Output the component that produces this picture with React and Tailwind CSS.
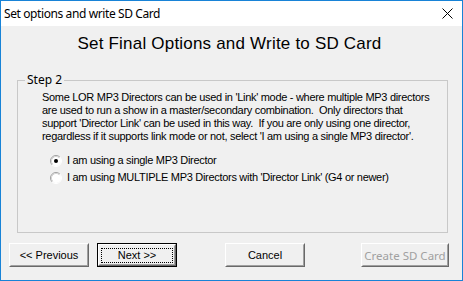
function Radio({ checked }) {
  return (
    <svg width="12" height="12" viewBox="0 0 12 12" className="shrink-0">
      <circle cx="6" cy="6" r="5" fill="#ffffff" />
      <path d="M2.11 9.89 A5.5 5.5 0 0 1 9.89 2.11" fill="none" stroke="#a0a0a0" strokeWidth="1" />
      <path d="M9.89 2.11 A5.5 5.5 0 0 1 2.11 9.89" fill="none" stroke="#ffffff" strokeWidth="1" />
      <path d="M2.82 9.18 A4.5 4.5 0 0 1 9.18 2.82" fill="none" stroke="#d4d4d4" strokeWidth="1" />
      {checked && <circle cx="6" cy="6" r="2" fill="#000000" />}
    </svg>
  )
}

function Button({ children, width, isDefault, disabled }) {
  const face = (
    <div className="flex h-full w-full border border-t-white border-l-white border-r-[#696969] border-b-[#696969]">
      <div className="flex h-full w-full items-center justify-center border border-t-[#f0f0f0] border-l-[#f0f0f0] border-r-[#a0a0a0] border-b-[#a0a0a0] bg-[#f0f0f0]">
        {isDefault ? (
          <div className="flex h-[15px] w-[72px] items-center justify-center border border-dotted border-black">{children}</div>
        ) : (
          children
        )}
      </div>
    </div>
  )
  return (
    <div
      className={`h-[24px] shrink-0 text-[11px] leading-[13px] ${disabled ? 'text-[#a0a0a0]' : 'text-black'} ${isDefault ? 'border border-black' : ''}`}
      style={{ width }}
    >
      {face}
    </div>
  )
}

export default function App() {
  return (
    <div className="flex h-[281px] w-[463px] flex-col border border-[#1883d7] bg-[#f0f0f0] font-['Liberation_Sans',Arial,sans-serif] text-black">
      <div className="flex h-[25px] shrink-0 items-center justify-between bg-white pl-[3px] pr-[9px]">
        <span className="font-['Noto_Sans',sans-serif] text-[12px] leading-[16px] tracking-[-0.4px]">Set options and write SD Card</span>
        <svg width="11" height="11" viewBox="0 0 11 11">
          <path d="M0.5 0.5 L10.5 10.5 M10.5 0.5 L0.5 10.5" stroke="#000" strokeWidth="1" />
        </svg>
      </div>

      <div className="mt-[8px] h-[20px] pr-[4px] text-center text-[17px] leading-[20px] tracking-[0.2px]">Set Final Options and Write to SD Card</div>

      <fieldset className="mt-[19px] ml-[16px] h-[160px] w-[431px] border border-[#c8c8c8]">
        <legend className="ml-[7px] px-[2px] font-['Noto_Sans',sans-serif] text-[12px] leading-[14px]">Step 2</legend>
        <div className="pl-[24px] text-[11px] tracking-[-0.3px]">
          <p className="mt-[4px] leading-[13px] whitespace-nowrap">
            Some LOR MP3 Directors can be used in 'Link' mode - where multiple MP3 directors
            <br />
            are used to run a show in a master/secondary combination.&nbsp; Only directors that
            <br />
            support 'Director Link' can be used in this way.&nbsp; If you are only using one director,
            <br />
            regardless if it supports link mode or not, select 'I am using a single MP3 director'.
          </p>
          <div className="mt-[9px] flex flex-col pl-[8px]">
            <div className="flex h-[17px] items-center gap-[5px] leading-[17px]">
              <Radio checked />
              <span>I am using a single MP3 Director</span>
            </div>
            <div className="flex h-[17px] items-center gap-[5px] leading-[17px]">
              <Radio />
              <span>I am using MULTIPLE MP3 Directors with 'Director Link' (G4 or newer)</span>
            </div>
          </div>
        </div>
      </fieldset>

      <div className="mt-[10px] flex pl-[8px]">
        <Button width={80}>&lt;&lt; Previous</Button>
        <div className="ml-[8px]">
          <Button width={80} isDefault>Next &gt;&gt;</Button>
        </div>
        <div className="ml-[48px]">
          <Button width={80}>Cancel</Button>
        </div>
        <div className="ml-[56px]">
          <Button width={88} disabled>
            <span className="font-['Noto_Sans',sans-serif] text-[11.5px]">Create SD Card</span>
          </Button>
        </div>
      </div>
    </div>
  )
}
